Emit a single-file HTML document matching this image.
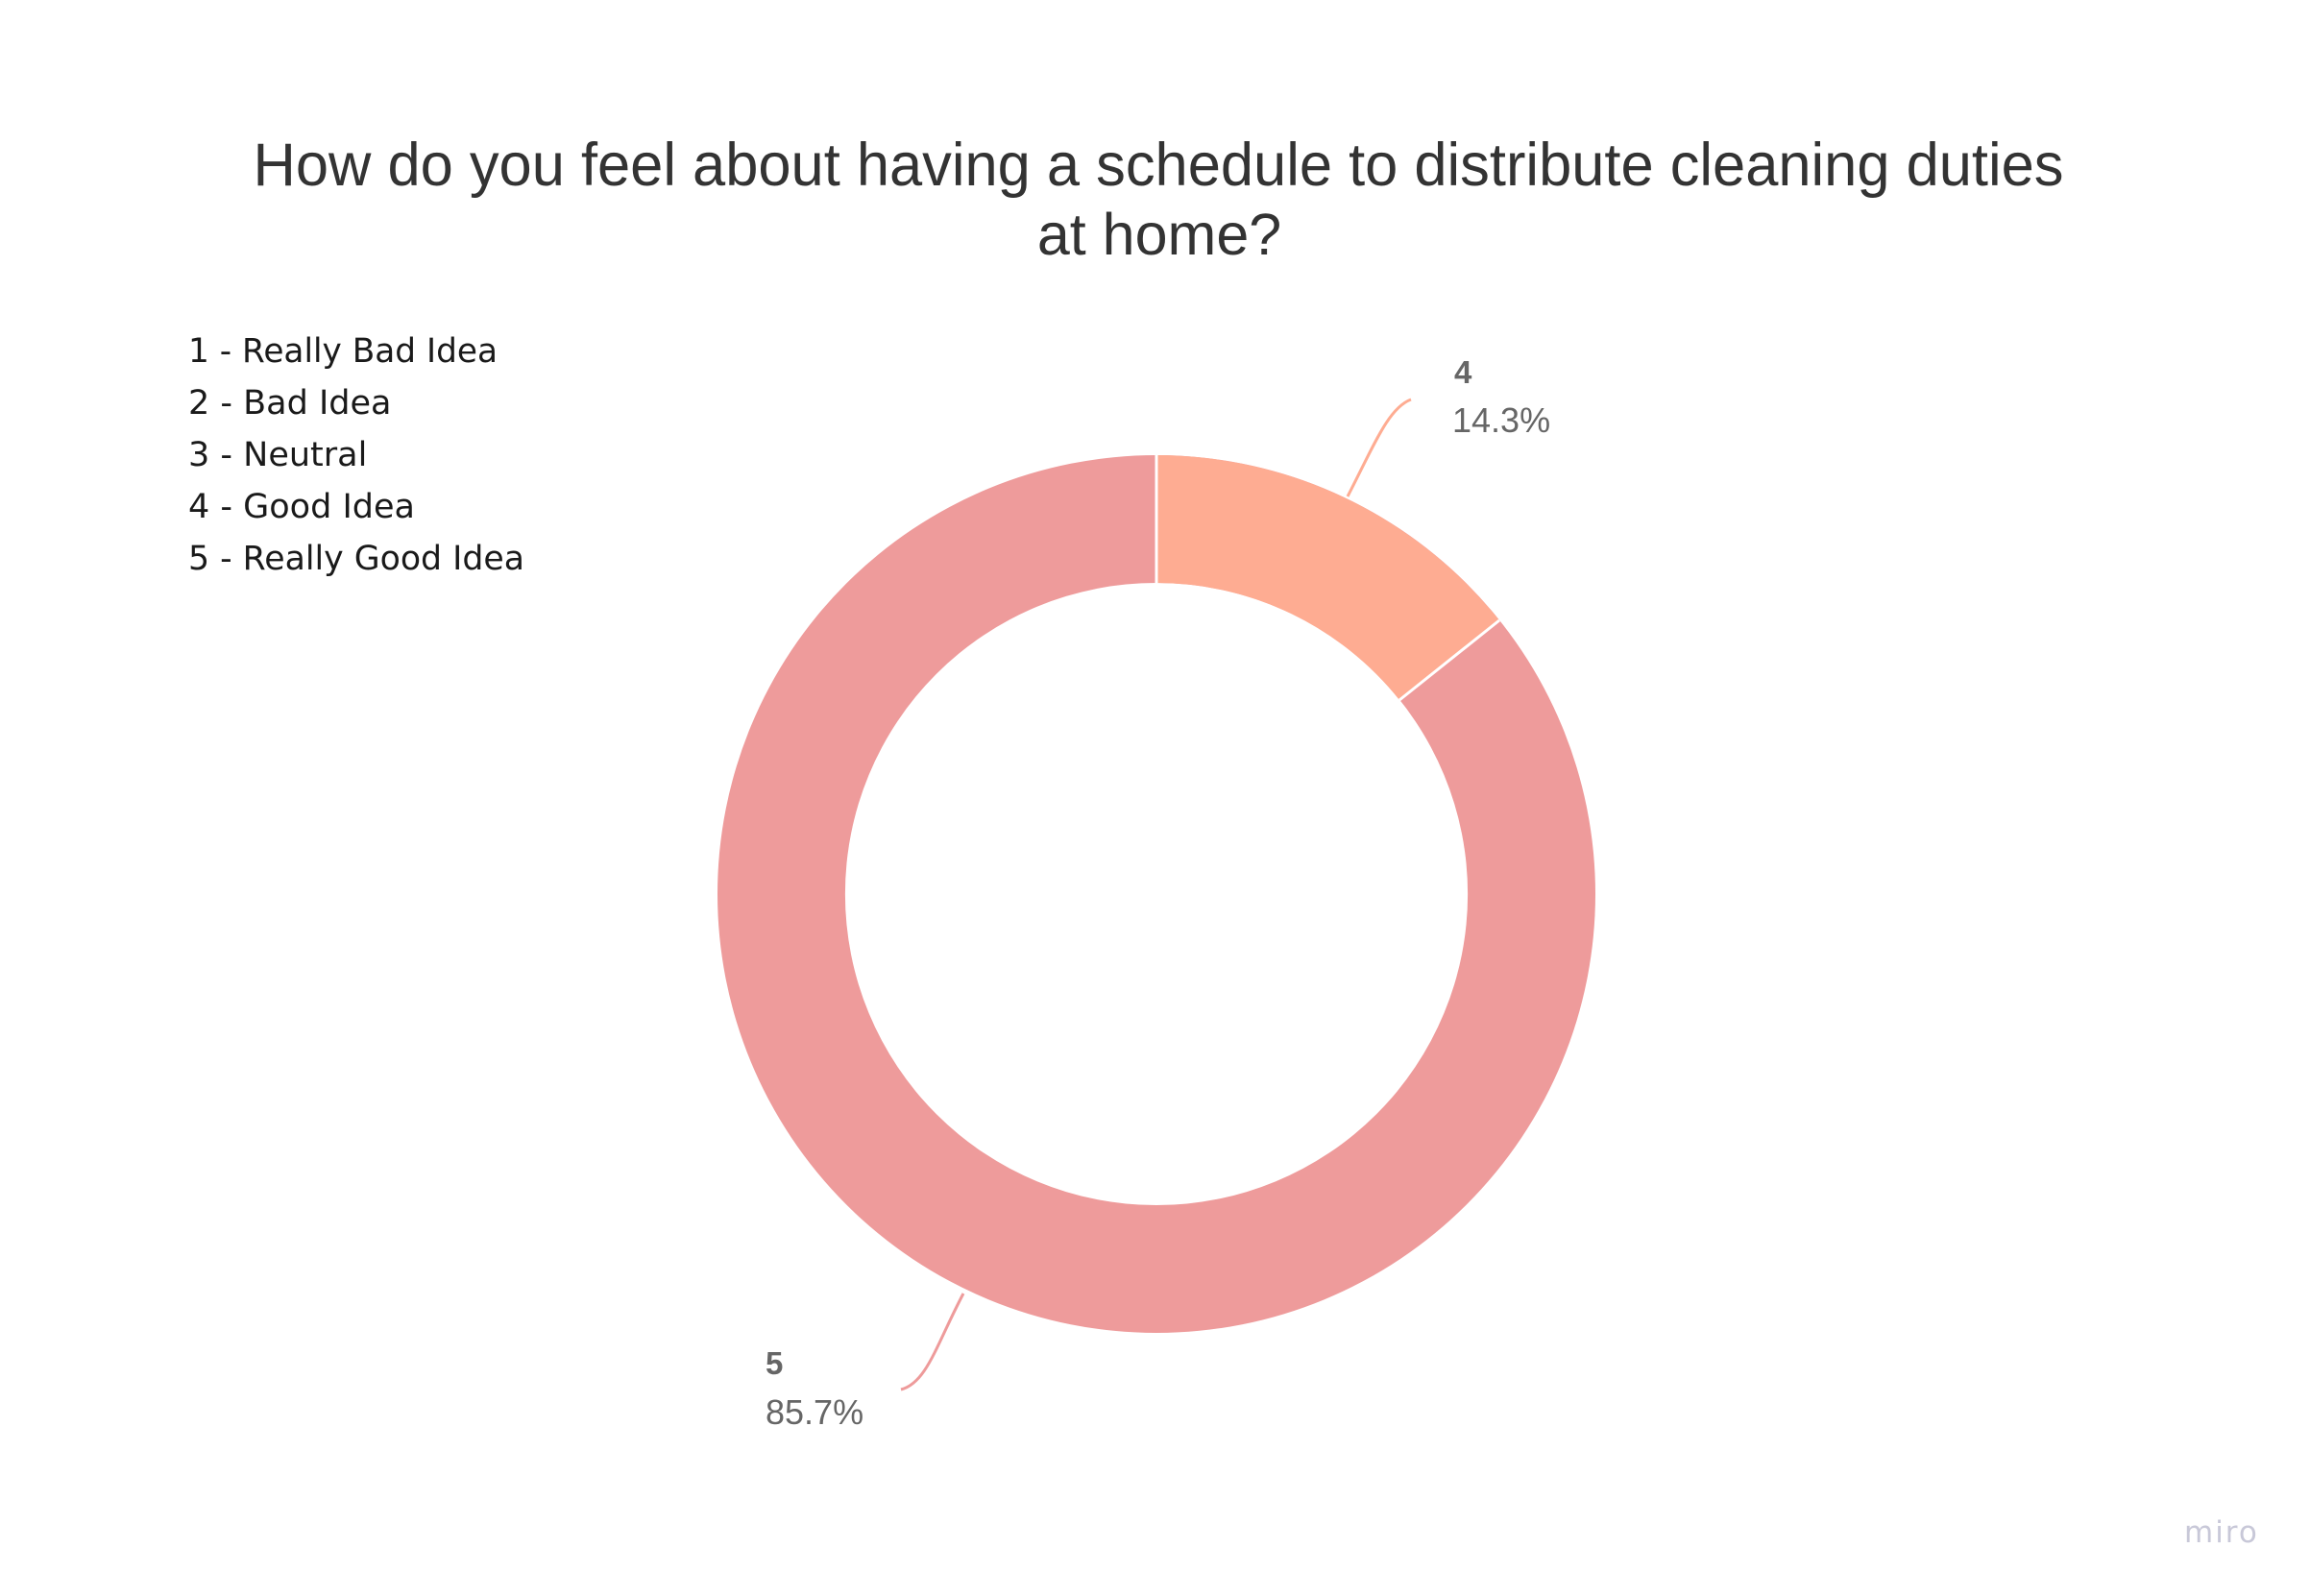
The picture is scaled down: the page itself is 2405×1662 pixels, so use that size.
<!DOCTYPE html>
<html><head><meta charset="utf-8"><style>
html,body{margin:0;padding:0;background:#fff;}
body{width:2405px;height:1662px;overflow:hidden;position:relative;}
</style></head><body>
<svg width="2405" height="1662" viewBox="0 0 2405 1662" xmlns="http://www.w3.org/2000/svg" style="position:absolute;left:0;top:0">
<text x="1206" y="193" text-anchor="middle" font-family="Liberation Sans, sans-serif" font-size="63" fill="#333" textLength="1885" lengthAdjust="spacingAndGlyphs">How do you feel about having a schedule to distribute cleaning duties</text>
<text x="1207" y="265" text-anchor="middle" font-family="Liberation Sans, sans-serif" font-size="61" fill="#333">at home?</text>
<g font-family="DejaVu Sans, Liberation Sans, sans-serif" font-size="35" fill="#1a1a1a">
<text x="196" y="377" textLength="322" lengthAdjust="spacingAndGlyphs">1 - Really Bad Idea</text>
<text x="196" y="431">2 - Bad Idea</text>
<text x="196" y="485">3 - Neutral</text>
<text x="196" y="539">4 -  Good Idea</text>
<text x="196" y="593" textLength="350" lengthAdjust="spacingAndGlyphs">5 - Really Good Idea</text>
</g>
<path d="M1204 474 A457 457 0 1 1 1204 1388 A457 457 0 1 1 1204 474 Z M1204 607 A324 324 0 1 0 1204 1255 A324 324 0 1 0 1204 607 Z" fill="#EE9B9B" fill-rule="evenodd"/>
<path d="M1204 474 A457 457 0 0 1 1561 646 L1457 729 A324 324 0 0 0 1204 607 Z" fill="#FEAC92"/>
<line x1="1204" y1="474" x2="1204" y2="607" stroke="#fff" stroke-width="3"/>
<line x1="1561" y1="646" x2="1457" y2="729" stroke="#fff" stroke-width="3"/>
<path d="M1403 517 C1430 465 1445 425 1469 416" fill="none" stroke="#FEAC92" stroke-width="3"/>
<path d="M1003 1347 C975 1400 965 1440 938 1447" fill="none" stroke="#EE9B9B" stroke-width="3"/>
<g font-family="Liberation Sans, sans-serif" fill="#666">
<text x="1514" y="399" font-size="33" font-weight="bold">4</text>
<text x="1512" y="450" font-size="36">14.3%</text>
<text x="797" y="1431" font-size="33" font-weight="bold">5</text>
<text x="797" y="1483" font-size="36">85.7%</text>
</g>
<text x="2274" y="1606" font-family="DejaVu Sans, sans-serif" font-size="31" fill="#c8c8d8" letter-spacing="2">miro</text>
</svg>
</body></html>
